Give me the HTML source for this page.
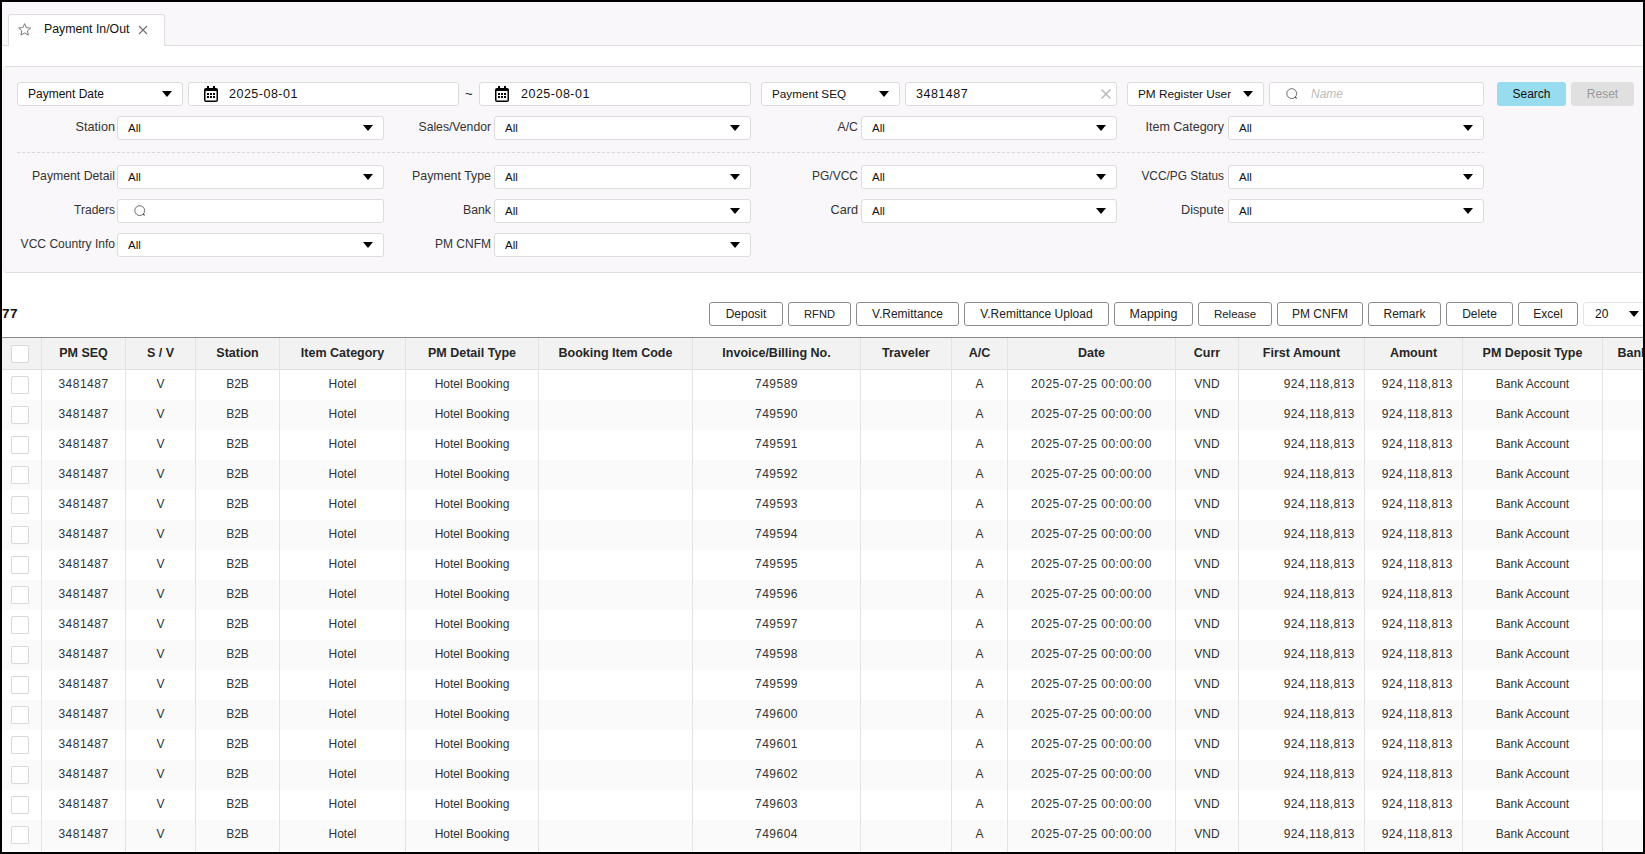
<!DOCTYPE html>
<html><head><meta charset="utf-8"><title>Payment In/Out</title><style>
html,body{margin:0;padding:0;background:#000;}
body{width:1645px;height:854px;overflow:hidden;position:relative;font-family:"Liberation Sans", sans-serif;}
#app{position:absolute;left:2px;top:2px;width:1641px;height:850px;overflow:hidden;background:#fff;}
#inner{position:absolute;left:-2px;top:-2px;width:1645px;height:854px;}
.txt{position:absolute;white-space:nowrap;line-height:16px;}
.box{position:absolute;background:#fff;border:1px solid #dcdcdc;border-radius:3px;box-sizing:border-box;}
.val{position:absolute;white-space:nowrap;line-height:24px;font-size:12px;color:#111;}
.lbl{position:absolute;white-space:nowrap;line-height:24px;font-size:12.4px;color:#333;text-align:right;}
.arr{position:absolute;width:0;height:0;border-left:5px solid transparent;border-right:5px solid transparent;border-top:6px solid #000;}
.btn{position:absolute;border-radius:3px;text-align:center;line-height:24px;font-size:12px;}
.obtn{position:absolute;border:1px solid #8c8c8c;border-radius:3px;box-sizing:border-box;background:#fff;text-align:center;line-height:22px;font-size:12px;color:#222;}
.th{position:absolute;top:338px;height:31px;line-height:31px;text-align:center;font-weight:bold;font-size:12.5px;color:#262626;white-space:nowrap;overflow:hidden;}
.td{position:absolute;height:30px;line-height:28px;text-align:center;font-size:12px;color:#333;white-space:nowrap;}
.dg{font-size:12.5px;letter-spacing:0.5px;}
.tdg{letter-spacing:0.5px;}
.cb{position:absolute;width:18px;height:18px;border:1px solid #d9d9d9;border-radius:2px;box-sizing:border-box;background:#fff;}
</style></head>
<body><div id="app"><div id="inner">
<div style="position:absolute;left:0;top:0;width:1645px;height:46px;background:#f9f7fa;border-bottom:1px solid #dedede;box-sizing:border-box"></div><div style="position:absolute;left:8px;top:14px;width:157px;height:32px;background:#fff;border:1px solid #dedede;border-bottom:none;border-radius:3px 3px 0 0;box-sizing:border-box"></div><svg style="position:absolute;left:0;top:0" width="40" height="40"><polygon points="24.60,23.70 26.33,27.61 30.59,28.05 27.41,30.91 28.30,35.10 24.60,32.95 20.90,35.10 21.79,30.91 18.61,28.05 22.87,27.61" fill="none" stroke="#777" stroke-width="1" stroke-linejoin="round"/></svg><div class="txt" style="left:44px;top:21px;font-size:12.3px;color:#111">Payment In/Out</div><svg style="position:absolute;left:138px;top:25px" width="10" height="10"><path d="M1 1L9 9M9 1L1 9" stroke="#707070" stroke-width="1.1"/></svg><div style="position:absolute;left:3px;top:66px;width:1650px;height:207px;background:#f9f7fa;border:1px solid #dedede;border-left-color:#f2f0f3;border-radius:4px;box-sizing:border-box"></div><div class="box" style="left:17px;top:82px;width:166px;height:24px"></div><div class="val" style="left:28px;top:82px;font-size:12px">Payment Date</div><div class="arr" style="left:162px;top:91px"></div><div class="box" style="left:188px;top:82px;width:271px;height:24px"></div><div style="position:absolute;left:204px;top:86px"><svg width="14" height="16" viewBox="0 0 14 16" style="display:block"><rect x="3" y="0" width="2" height="3" fill="#000"/><rect x="9" y="0" width="2" height="3" fill="#000"/><path fill-rule="evenodd" fill="#000" d="M2 2H12A2 2 0 0 1 14 4V14A2 2 0 0 1 12 16H2A2 2 0 0 1 0 14V4A2 2 0 0 1 2 2ZM1.5 5V14.5H12.5V5Z"/><rect x="3" y="7" width="2" height="2" fill="#000"/><rect x="6" y="7" width="2" height="2" fill="#000"/><rect x="9" y="7" width="2" height="2" fill="#000"/><rect x="3" y="10" width="2" height="2" fill="#000"/><rect x="6" y="10" width="2" height="2" fill="#000"/><rect x="9" y="10" width="2" height="2" fill="#000"/></svg></div><div class="val dg" style="left:229px;top:82px">2025-08-01</div><div class="txt" style="left:465px;top:86px;font-size:13px;color:#111">~</div><div class="box" style="left:479px;top:82px;width:272px;height:24px"></div><div style="position:absolute;left:495px;top:86px"><svg width="14" height="16" viewBox="0 0 14 16" style="display:block"><rect x="3" y="0" width="2" height="3" fill="#000"/><rect x="9" y="0" width="2" height="3" fill="#000"/><path fill-rule="evenodd" fill="#000" d="M2 2H12A2 2 0 0 1 14 4V14A2 2 0 0 1 12 16H2A2 2 0 0 1 0 14V4A2 2 0 0 1 2 2ZM1.5 5V14.5H12.5V5Z"/><rect x="3" y="7" width="2" height="2" fill="#000"/><rect x="6" y="7" width="2" height="2" fill="#000"/><rect x="9" y="7" width="2" height="2" fill="#000"/><rect x="3" y="10" width="2" height="2" fill="#000"/><rect x="6" y="10" width="2" height="2" fill="#000"/><rect x="9" y="10" width="2" height="2" fill="#000"/></svg></div><div class="val dg" style="left:521px;top:82px">2025-08-01</div><div class="box" style="left:761px;top:82px;width:139px;height:24px"></div><div class="val" style="left:772px;top:82px;font-size:11.7px">Payment SEQ</div><div class="arr" style="left:879px;top:91px"></div><div class="box" style="left:905px;top:82px;width:212px;height:24px"></div><div class="val dg" style="left:916px;top:82px">3481487</div><svg style="position:absolute;left:1100px;top:88px" width="12" height="12"><path d="M1.5 1.5L10.5 10.5M10.5 1.5L1.5 10.5" stroke="#bbb" stroke-width="1.6"/></svg><div class="box" style="left:1127px;top:82px;width:137px;height:24px"></div><div class="val" style="left:1138px;top:82px;font-size:11.8px">PM Register User</div><div class="arr" style="left:1243px;top:91px"></div><div class="box" style="left:1269px;top:82px;width:215px;height:24px"></div><div style="position:absolute;left:1285px;top:87px"><svg width="14" height="14" viewBox="0 0 14 14" style="display:block"><circle cx="6.7" cy="6.6" r="4.9" fill="none" stroke="#6a6a6a" stroke-width="1"/><line x1="10.3" y1="10.2" x2="11.6" y2="11.5" stroke="#555" stroke-width="1.2"/></svg></div><div class="val" style="left:1311px;top:82px;color:#bbb;font-style:italic">Name</div><div class="btn" style="left:1497px;top:82px;width:69px;height:24px;background:#98dcf0;color:#111">Search</div><div class="btn" style="left:1571px;top:82px;width:63px;height:24px;background:#e0e0e0;color:#999">Reset</div><div class="lbl" style="right:1530px;top:115px;font-size:12.7px">Station</div><div class="box" style="left:117px;top:116px;width:267px;height:24px"></div><div class="val" style="left:128px;top:116px;font-size:11.5px">All</div><div class="arr" style="left:363px;top:125px"></div><div class="lbl" style="right:1154px;top:115px;font-size:12.2px">Sales/Vendor</div><div class="box" style="left:494px;top:116px;width:257px;height:24px"></div><div class="val" style="left:505px;top:116px;font-size:11.5px">All</div><div class="arr" style="left:730px;top:125px"></div><div class="lbl" style="right:787px;top:115px;font-size:12.3px">A/C</div><div class="box" style="left:861px;top:116px;width:256px;height:24px"></div><div class="val" style="left:872px;top:116px;font-size:11.5px">All</div><div class="arr" style="left:1096px;top:125px"></div><div class="lbl" style="right:421px;top:115px;font-size:12.5px">Item Category</div><div class="box" style="left:1228px;top:116px;width:256px;height:24px"></div><div class="val" style="left:1239px;top:116px;font-size:11.5px">All</div><div class="arr" style="left:1463px;top:125px"></div><div class="lbl" style="right:1530px;top:164px;font-size:12.25px">Payment Detail</div><div class="box" style="left:117px;top:165px;width:267px;height:24px"></div><div class="val" style="left:128px;top:165px;font-size:11.5px">All</div><div class="arr" style="left:363px;top:174px"></div><div class="lbl" style="right:1154px;top:164px;font-size:12.4px">Payment Type</div><div class="box" style="left:494px;top:165px;width:257px;height:24px"></div><div class="val" style="left:505px;top:165px;font-size:11.5px">All</div><div class="arr" style="left:730px;top:174px"></div><div class="lbl" style="right:787px;top:164px;font-size:12px">PG/VCC</div><div class="box" style="left:861px;top:165px;width:256px;height:24px"></div><div class="val" style="left:872px;top:165px;font-size:11.5px">All</div><div class="arr" style="left:1096px;top:174px"></div><div class="lbl" style="right:421px;top:164px;font-size:11.9px">VCC/PG Status</div><div class="box" style="left:1228px;top:165px;width:256px;height:24px"></div><div class="val" style="left:1239px;top:165px;font-size:11.5px">All</div><div class="arr" style="left:1463px;top:174px"></div><div class="lbl" style="right:1530px;top:198px;font-size:12px">Traders</div><div class="box" style="left:117px;top:199px;width:267px;height:24px"></div><div style="position:absolute;left:133px;top:204px"><svg width="14" height="14" viewBox="0 0 14 14" style="display:block"><circle cx="6.7" cy="6.6" r="4.9" fill="none" stroke="#6a6a6a" stroke-width="1"/><line x1="10.3" y1="10.2" x2="11.6" y2="11.5" stroke="#555" stroke-width="1.2"/></svg></div><div class="lbl" style="right:1154px;top:198px;font-size:12.3px">Bank</div><div class="box" style="left:494px;top:199px;width:257px;height:24px"></div><div class="val" style="left:505px;top:199px;font-size:11.5px">All</div><div class="arr" style="left:730px;top:208px"></div><div class="lbl" style="right:787px;top:198px;font-size:12.7px">Card</div><div class="box" style="left:861px;top:199px;width:256px;height:24px"></div><div class="val" style="left:872px;top:199px;font-size:11.5px">All</div><div class="arr" style="left:1096px;top:208px"></div><div class="lbl" style="right:421px;top:198px;font-size:12.7px">Dispute</div><div class="box" style="left:1228px;top:199px;width:256px;height:24px"></div><div class="val" style="left:1239px;top:199px;font-size:11.5px">All</div><div class="arr" style="left:1463px;top:208px"></div><div class="lbl" style="right:1530px;top:232px;font-size:12.05px">VCC Country Info</div><div class="box" style="left:117px;top:233px;width:267px;height:24px"></div><div class="val" style="left:128px;top:233px;font-size:11.5px">All</div><div class="arr" style="left:363px;top:242px"></div><div class="lbl" style="right:1154px;top:232px;font-size:12px">PM CNFM</div><div class="box" style="left:494px;top:233px;width:257px;height:24px"></div><div class="val" style="left:505px;top:233px;font-size:11.5px">All</div><div class="arr" style="left:730px;top:242px"></div><div style="position:absolute;left:17px;top:152px;width:1467px;height:1px;background:repeating-linear-gradient(90deg,#d8d8d8 0 3px,transparent 3px 5px)"></div><div class="txt" style="left:2px;top:306px;font-size:13.5px;font-weight:bold;letter-spacing:0.6px;color:#111">77</div><div class="obtn" style="left:709px;top:302px;width:74px;height:24px;font-size:12px">Deposit</div><div class="obtn" style="left:788px;top:302px;width:63px;height:24px;font-size:11.1px">RFND</div><div class="obtn" style="left:856px;top:302px;width:103px;height:24px;font-size:12px">V.Remittance</div><div class="obtn" style="left:964px;top:302px;width:145px;height:24px;font-size:12px">V.Remittance Upload</div><div class="obtn" style="left:1114px;top:302px;width:79px;height:24px;font-size:12.5px">Mapping</div><div class="obtn" style="left:1198px;top:302px;width:74px;height:24px;font-size:11.5px">Release</div><div class="obtn" style="left:1277px;top:302px;width:86px;height:24px;font-size:12px">PM CNFM</div><div class="obtn" style="left:1368px;top:302px;width:73px;height:24px;font-size:12px">Remark</div><div class="obtn" style="left:1446px;top:302px;width:67px;height:24px;font-size:12px">Delete</div><div class="obtn" style="left:1518px;top:302px;width:60px;height:24px;font-size:12px">Excel</div><div class="box" style="left:1583px;top:302px;width:80px;height:24px;border-color:#e4e4e4"></div><div class="val" style="left:1595px;top:302px">20</div><div class="arr" style="left:1629px;top:311px"></div><div style="position:absolute;left:0;top:337px;width:1645px;height:1px;background:#8a8a8a"></div><div style="position:absolute;left:0;top:338px;width:1645px;height:31px;background:#f2f2f2"></div><div style="position:absolute;left:0;top:369px;width:1645px;height:1px;background:#e0e0e0"></div><div style="position:absolute;left:0;top:370px;width:1645px;height:30px;background:#ffffff"></div><div style="position:absolute;left:0;top:400px;width:1645px;height:30px;background:#fafafa"></div><div style="position:absolute;left:0;top:430px;width:1645px;height:30px;background:#ffffff"></div><div style="position:absolute;left:0;top:460px;width:1645px;height:30px;background:#fafafa"></div><div style="position:absolute;left:0;top:490px;width:1645px;height:30px;background:#ffffff"></div><div style="position:absolute;left:0;top:520px;width:1645px;height:30px;background:#fafafa"></div><div style="position:absolute;left:0;top:550px;width:1645px;height:30px;background:#ffffff"></div><div style="position:absolute;left:0;top:580px;width:1645px;height:30px;background:#fafafa"></div><div style="position:absolute;left:0;top:610px;width:1645px;height:30px;background:#ffffff"></div><div style="position:absolute;left:0;top:640px;width:1645px;height:30px;background:#fafafa"></div><div style="position:absolute;left:0;top:670px;width:1645px;height:30px;background:#ffffff"></div><div style="position:absolute;left:0;top:700px;width:1645px;height:30px;background:#fafafa"></div><div style="position:absolute;left:0;top:730px;width:1645px;height:30px;background:#ffffff"></div><div style="position:absolute;left:0;top:760px;width:1645px;height:30px;background:#fafafa"></div><div style="position:absolute;left:0;top:790px;width:1645px;height:30px;background:#ffffff"></div><div style="position:absolute;left:0;top:820px;width:1645px;height:30px;background:#fafafa"></div><div style="position:absolute;left:0;top:850px;width:1645px;height:30px;background:#ffffff"></div><div style="position:absolute;left:41px;top:338px;width:1px;height:520px;background:#e3e3e3"></div><div style="position:absolute;left:125px;top:338px;width:1px;height:520px;background:#e3e3e3"></div><div style="position:absolute;left:195px;top:338px;width:1px;height:520px;background:#e3e3e3"></div><div style="position:absolute;left:279px;top:338px;width:1px;height:520px;background:#e3e3e3"></div><div style="position:absolute;left:405px;top:338px;width:1px;height:520px;background:#e3e3e3"></div><div style="position:absolute;left:538px;top:338px;width:1px;height:520px;background:#e3e3e3"></div><div style="position:absolute;left:692px;top:338px;width:1px;height:520px;background:#e3e3e3"></div><div style="position:absolute;left:860px;top:338px;width:1px;height:520px;background:#e3e3e3"></div><div style="position:absolute;left:951px;top:338px;width:1px;height:520px;background:#e3e3e3"></div><div style="position:absolute;left:1007px;top:338px;width:1px;height:520px;background:#e3e3e3"></div><div style="position:absolute;left:1175px;top:338px;width:1px;height:520px;background:#e3e3e3"></div><div style="position:absolute;left:1238px;top:338px;width:1px;height:520px;background:#e3e3e3"></div><div style="position:absolute;left:1364px;top:338px;width:1px;height:520px;background:#e3e3e3"></div><div style="position:absolute;left:1462px;top:338px;width:1px;height:520px;background:#e3e3e3"></div><div style="position:absolute;left:1602px;top:338px;width:1px;height:520px;background:#e3e3e3"></div><div class="th" style="left:42px;width:83px">PM SEQ</div><div class="th" style="left:126px;width:69px">S / V</div><div class="th" style="left:196px;width:83px">Station</div><div class="th" style="left:280px;width:125px">Item Category</div><div class="th" style="left:406px;width:132px">PM Detail Type</div><div class="th" style="left:539px;width:153px">Booking Item Code</div><div class="th" style="left:693px;width:167px">Invoice/Billing No.</div><div class="th" style="left:861px;width:90px">Traveler</div><div class="th" style="left:952px;width:55px">A/C</div><div class="th" style="left:1008px;width:167px">Date</div><div class="th" style="left:1176px;width:62px">Curr</div><div class="th" style="left:1239px;width:125px">First Amount</div><div class="th" style="left:1365px;width:97px">Amount</div><div class="th" style="left:1463px;width:139px">PM Deposit Type</div><div class="th" style="left:1603px;width:97px">Bank Name</div><div class="cb" style="left:11px;top:345px"></div><div class="cb" style="left:11px;top:376px"></div><div class="td tdg" style="left:42px;width:83px;top:370px">3481487</div><div class="td" style="left:126px;width:69px;top:370px">V</div><div class="td" style="left:196px;width:83px;top:370px">B2B</div><div class="td" style="left:280px;width:125px;top:370px">Hotel</div><div class="td" style="left:406px;width:132px;top:370px">Hotel Booking</div><div class="td tdg" style="left:693px;width:167px;top:370px">749589</div><div class="td" style="left:952px;width:55px;top:370px">A</div><div class="td tdg" style="left:1008px;width:167px;top:370px">2025-07-25 00:00:00</div><div class="td" style="left:1176px;width:62px;top:370px">VND</div><div class="td tdg" style="left:1239px;width:116px;top:370px;text-align:right">924,118,813</div><div class="td tdg" style="left:1365px;width:88px;top:370px;text-align:right">924,118,813</div><div class="td" style="left:1463px;width:139px;top:370px">Bank Account</div><div class="cb" style="left:11px;top:406px"></div><div class="td tdg" style="left:42px;width:83px;top:400px">3481487</div><div class="td" style="left:126px;width:69px;top:400px">V</div><div class="td" style="left:196px;width:83px;top:400px">B2B</div><div class="td" style="left:280px;width:125px;top:400px">Hotel</div><div class="td" style="left:406px;width:132px;top:400px">Hotel Booking</div><div class="td tdg" style="left:693px;width:167px;top:400px">749590</div><div class="td" style="left:952px;width:55px;top:400px">A</div><div class="td tdg" style="left:1008px;width:167px;top:400px">2025-07-25 00:00:00</div><div class="td" style="left:1176px;width:62px;top:400px">VND</div><div class="td tdg" style="left:1239px;width:116px;top:400px;text-align:right">924,118,813</div><div class="td tdg" style="left:1365px;width:88px;top:400px;text-align:right">924,118,813</div><div class="td" style="left:1463px;width:139px;top:400px">Bank Account</div><div class="cb" style="left:11px;top:436px"></div><div class="td tdg" style="left:42px;width:83px;top:430px">3481487</div><div class="td" style="left:126px;width:69px;top:430px">V</div><div class="td" style="left:196px;width:83px;top:430px">B2B</div><div class="td" style="left:280px;width:125px;top:430px">Hotel</div><div class="td" style="left:406px;width:132px;top:430px">Hotel Booking</div><div class="td tdg" style="left:693px;width:167px;top:430px">749591</div><div class="td" style="left:952px;width:55px;top:430px">A</div><div class="td tdg" style="left:1008px;width:167px;top:430px">2025-07-25 00:00:00</div><div class="td" style="left:1176px;width:62px;top:430px">VND</div><div class="td tdg" style="left:1239px;width:116px;top:430px;text-align:right">924,118,813</div><div class="td tdg" style="left:1365px;width:88px;top:430px;text-align:right">924,118,813</div><div class="td" style="left:1463px;width:139px;top:430px">Bank Account</div><div class="cb" style="left:11px;top:466px"></div><div class="td tdg" style="left:42px;width:83px;top:460px">3481487</div><div class="td" style="left:126px;width:69px;top:460px">V</div><div class="td" style="left:196px;width:83px;top:460px">B2B</div><div class="td" style="left:280px;width:125px;top:460px">Hotel</div><div class="td" style="left:406px;width:132px;top:460px">Hotel Booking</div><div class="td tdg" style="left:693px;width:167px;top:460px">749592</div><div class="td" style="left:952px;width:55px;top:460px">A</div><div class="td tdg" style="left:1008px;width:167px;top:460px">2025-07-25 00:00:00</div><div class="td" style="left:1176px;width:62px;top:460px">VND</div><div class="td tdg" style="left:1239px;width:116px;top:460px;text-align:right">924,118,813</div><div class="td tdg" style="left:1365px;width:88px;top:460px;text-align:right">924,118,813</div><div class="td" style="left:1463px;width:139px;top:460px">Bank Account</div><div class="cb" style="left:11px;top:496px"></div><div class="td tdg" style="left:42px;width:83px;top:490px">3481487</div><div class="td" style="left:126px;width:69px;top:490px">V</div><div class="td" style="left:196px;width:83px;top:490px">B2B</div><div class="td" style="left:280px;width:125px;top:490px">Hotel</div><div class="td" style="left:406px;width:132px;top:490px">Hotel Booking</div><div class="td tdg" style="left:693px;width:167px;top:490px">749593</div><div class="td" style="left:952px;width:55px;top:490px">A</div><div class="td tdg" style="left:1008px;width:167px;top:490px">2025-07-25 00:00:00</div><div class="td" style="left:1176px;width:62px;top:490px">VND</div><div class="td tdg" style="left:1239px;width:116px;top:490px;text-align:right">924,118,813</div><div class="td tdg" style="left:1365px;width:88px;top:490px;text-align:right">924,118,813</div><div class="td" style="left:1463px;width:139px;top:490px">Bank Account</div><div class="cb" style="left:11px;top:526px"></div><div class="td tdg" style="left:42px;width:83px;top:520px">3481487</div><div class="td" style="left:126px;width:69px;top:520px">V</div><div class="td" style="left:196px;width:83px;top:520px">B2B</div><div class="td" style="left:280px;width:125px;top:520px">Hotel</div><div class="td" style="left:406px;width:132px;top:520px">Hotel Booking</div><div class="td tdg" style="left:693px;width:167px;top:520px">749594</div><div class="td" style="left:952px;width:55px;top:520px">A</div><div class="td tdg" style="left:1008px;width:167px;top:520px">2025-07-25 00:00:00</div><div class="td" style="left:1176px;width:62px;top:520px">VND</div><div class="td tdg" style="left:1239px;width:116px;top:520px;text-align:right">924,118,813</div><div class="td tdg" style="left:1365px;width:88px;top:520px;text-align:right">924,118,813</div><div class="td" style="left:1463px;width:139px;top:520px">Bank Account</div><div class="cb" style="left:11px;top:556px"></div><div class="td tdg" style="left:42px;width:83px;top:550px">3481487</div><div class="td" style="left:126px;width:69px;top:550px">V</div><div class="td" style="left:196px;width:83px;top:550px">B2B</div><div class="td" style="left:280px;width:125px;top:550px">Hotel</div><div class="td" style="left:406px;width:132px;top:550px">Hotel Booking</div><div class="td tdg" style="left:693px;width:167px;top:550px">749595</div><div class="td" style="left:952px;width:55px;top:550px">A</div><div class="td tdg" style="left:1008px;width:167px;top:550px">2025-07-25 00:00:00</div><div class="td" style="left:1176px;width:62px;top:550px">VND</div><div class="td tdg" style="left:1239px;width:116px;top:550px;text-align:right">924,118,813</div><div class="td tdg" style="left:1365px;width:88px;top:550px;text-align:right">924,118,813</div><div class="td" style="left:1463px;width:139px;top:550px">Bank Account</div><div class="cb" style="left:11px;top:586px"></div><div class="td tdg" style="left:42px;width:83px;top:580px">3481487</div><div class="td" style="left:126px;width:69px;top:580px">V</div><div class="td" style="left:196px;width:83px;top:580px">B2B</div><div class="td" style="left:280px;width:125px;top:580px">Hotel</div><div class="td" style="left:406px;width:132px;top:580px">Hotel Booking</div><div class="td tdg" style="left:693px;width:167px;top:580px">749596</div><div class="td" style="left:952px;width:55px;top:580px">A</div><div class="td tdg" style="left:1008px;width:167px;top:580px">2025-07-25 00:00:00</div><div class="td" style="left:1176px;width:62px;top:580px">VND</div><div class="td tdg" style="left:1239px;width:116px;top:580px;text-align:right">924,118,813</div><div class="td tdg" style="left:1365px;width:88px;top:580px;text-align:right">924,118,813</div><div class="td" style="left:1463px;width:139px;top:580px">Bank Account</div><div class="cb" style="left:11px;top:616px"></div><div class="td tdg" style="left:42px;width:83px;top:610px">3481487</div><div class="td" style="left:126px;width:69px;top:610px">V</div><div class="td" style="left:196px;width:83px;top:610px">B2B</div><div class="td" style="left:280px;width:125px;top:610px">Hotel</div><div class="td" style="left:406px;width:132px;top:610px">Hotel Booking</div><div class="td tdg" style="left:693px;width:167px;top:610px">749597</div><div class="td" style="left:952px;width:55px;top:610px">A</div><div class="td tdg" style="left:1008px;width:167px;top:610px">2025-07-25 00:00:00</div><div class="td" style="left:1176px;width:62px;top:610px">VND</div><div class="td tdg" style="left:1239px;width:116px;top:610px;text-align:right">924,118,813</div><div class="td tdg" style="left:1365px;width:88px;top:610px;text-align:right">924,118,813</div><div class="td" style="left:1463px;width:139px;top:610px">Bank Account</div><div class="cb" style="left:11px;top:646px"></div><div class="td tdg" style="left:42px;width:83px;top:640px">3481487</div><div class="td" style="left:126px;width:69px;top:640px">V</div><div class="td" style="left:196px;width:83px;top:640px">B2B</div><div class="td" style="left:280px;width:125px;top:640px">Hotel</div><div class="td" style="left:406px;width:132px;top:640px">Hotel Booking</div><div class="td tdg" style="left:693px;width:167px;top:640px">749598</div><div class="td" style="left:952px;width:55px;top:640px">A</div><div class="td tdg" style="left:1008px;width:167px;top:640px">2025-07-25 00:00:00</div><div class="td" style="left:1176px;width:62px;top:640px">VND</div><div class="td tdg" style="left:1239px;width:116px;top:640px;text-align:right">924,118,813</div><div class="td tdg" style="left:1365px;width:88px;top:640px;text-align:right">924,118,813</div><div class="td" style="left:1463px;width:139px;top:640px">Bank Account</div><div class="cb" style="left:11px;top:676px"></div><div class="td tdg" style="left:42px;width:83px;top:670px">3481487</div><div class="td" style="left:126px;width:69px;top:670px">V</div><div class="td" style="left:196px;width:83px;top:670px">B2B</div><div class="td" style="left:280px;width:125px;top:670px">Hotel</div><div class="td" style="left:406px;width:132px;top:670px">Hotel Booking</div><div class="td tdg" style="left:693px;width:167px;top:670px">749599</div><div class="td" style="left:952px;width:55px;top:670px">A</div><div class="td tdg" style="left:1008px;width:167px;top:670px">2025-07-25 00:00:00</div><div class="td" style="left:1176px;width:62px;top:670px">VND</div><div class="td tdg" style="left:1239px;width:116px;top:670px;text-align:right">924,118,813</div><div class="td tdg" style="left:1365px;width:88px;top:670px;text-align:right">924,118,813</div><div class="td" style="left:1463px;width:139px;top:670px">Bank Account</div><div class="cb" style="left:11px;top:706px"></div><div class="td tdg" style="left:42px;width:83px;top:700px">3481487</div><div class="td" style="left:126px;width:69px;top:700px">V</div><div class="td" style="left:196px;width:83px;top:700px">B2B</div><div class="td" style="left:280px;width:125px;top:700px">Hotel</div><div class="td" style="left:406px;width:132px;top:700px">Hotel Booking</div><div class="td tdg" style="left:693px;width:167px;top:700px">749600</div><div class="td" style="left:952px;width:55px;top:700px">A</div><div class="td tdg" style="left:1008px;width:167px;top:700px">2025-07-25 00:00:00</div><div class="td" style="left:1176px;width:62px;top:700px">VND</div><div class="td tdg" style="left:1239px;width:116px;top:700px;text-align:right">924,118,813</div><div class="td tdg" style="left:1365px;width:88px;top:700px;text-align:right">924,118,813</div><div class="td" style="left:1463px;width:139px;top:700px">Bank Account</div><div class="cb" style="left:11px;top:736px"></div><div class="td tdg" style="left:42px;width:83px;top:730px">3481487</div><div class="td" style="left:126px;width:69px;top:730px">V</div><div class="td" style="left:196px;width:83px;top:730px">B2B</div><div class="td" style="left:280px;width:125px;top:730px">Hotel</div><div class="td" style="left:406px;width:132px;top:730px">Hotel Booking</div><div class="td tdg" style="left:693px;width:167px;top:730px">749601</div><div class="td" style="left:952px;width:55px;top:730px">A</div><div class="td tdg" style="left:1008px;width:167px;top:730px">2025-07-25 00:00:00</div><div class="td" style="left:1176px;width:62px;top:730px">VND</div><div class="td tdg" style="left:1239px;width:116px;top:730px;text-align:right">924,118,813</div><div class="td tdg" style="left:1365px;width:88px;top:730px;text-align:right">924,118,813</div><div class="td" style="left:1463px;width:139px;top:730px">Bank Account</div><div class="cb" style="left:11px;top:766px"></div><div class="td tdg" style="left:42px;width:83px;top:760px">3481487</div><div class="td" style="left:126px;width:69px;top:760px">V</div><div class="td" style="left:196px;width:83px;top:760px">B2B</div><div class="td" style="left:280px;width:125px;top:760px">Hotel</div><div class="td" style="left:406px;width:132px;top:760px">Hotel Booking</div><div class="td tdg" style="left:693px;width:167px;top:760px">749602</div><div class="td" style="left:952px;width:55px;top:760px">A</div><div class="td tdg" style="left:1008px;width:167px;top:760px">2025-07-25 00:00:00</div><div class="td" style="left:1176px;width:62px;top:760px">VND</div><div class="td tdg" style="left:1239px;width:116px;top:760px;text-align:right">924,118,813</div><div class="td tdg" style="left:1365px;width:88px;top:760px;text-align:right">924,118,813</div><div class="td" style="left:1463px;width:139px;top:760px">Bank Account</div><div class="cb" style="left:11px;top:796px"></div><div class="td tdg" style="left:42px;width:83px;top:790px">3481487</div><div class="td" style="left:126px;width:69px;top:790px">V</div><div class="td" style="left:196px;width:83px;top:790px">B2B</div><div class="td" style="left:280px;width:125px;top:790px">Hotel</div><div class="td" style="left:406px;width:132px;top:790px">Hotel Booking</div><div class="td tdg" style="left:693px;width:167px;top:790px">749603</div><div class="td" style="left:952px;width:55px;top:790px">A</div><div class="td tdg" style="left:1008px;width:167px;top:790px">2025-07-25 00:00:00</div><div class="td" style="left:1176px;width:62px;top:790px">VND</div><div class="td tdg" style="left:1239px;width:116px;top:790px;text-align:right">924,118,813</div><div class="td tdg" style="left:1365px;width:88px;top:790px;text-align:right">924,118,813</div><div class="td" style="left:1463px;width:139px;top:790px">Bank Account</div><div class="cb" style="left:11px;top:826px"></div><div class="td tdg" style="left:42px;width:83px;top:820px">3481487</div><div class="td" style="left:126px;width:69px;top:820px">V</div><div class="td" style="left:196px;width:83px;top:820px">B2B</div><div class="td" style="left:280px;width:125px;top:820px">Hotel</div><div class="td" style="left:406px;width:132px;top:820px">Hotel Booking</div><div class="td tdg" style="left:693px;width:167px;top:820px">749604</div><div class="td" style="left:952px;width:55px;top:820px">A</div><div class="td tdg" style="left:1008px;width:167px;top:820px">2025-07-25 00:00:00</div><div class="td" style="left:1176px;width:62px;top:820px">VND</div><div class="td tdg" style="left:1239px;width:116px;top:820px;text-align:right">924,118,813</div><div class="td tdg" style="left:1365px;width:88px;top:820px;text-align:right">924,118,813</div><div class="td" style="left:1463px;width:139px;top:820px">Bank Account</div><div class="cb" style="left:11px;top:856px"></div><div class="td tdg" style="left:42px;width:83px;top:850px">3481487</div><div class="td" style="left:126px;width:69px;top:850px">V</div><div class="td" style="left:196px;width:83px;top:850px">B2B</div><div class="td" style="left:280px;width:125px;top:850px">Hotel</div><div class="td" style="left:406px;width:132px;top:850px">Hotel Booking</div><div class="td tdg" style="left:693px;width:167px;top:850px">749605</div><div class="td" style="left:952px;width:55px;top:850px">A</div><div class="td tdg" style="left:1008px;width:167px;top:850px">2025-07-25 00:00:00</div><div class="td" style="left:1176px;width:62px;top:850px">VND</div><div class="td tdg" style="left:1239px;width:116px;top:850px;text-align:right">924,118,813</div><div class="td tdg" style="left:1365px;width:88px;top:850px;text-align:right">924,118,813</div><div class="td" style="left:1463px;width:139px;top:850px">Bank Account</div>
</div></div></body></html>
